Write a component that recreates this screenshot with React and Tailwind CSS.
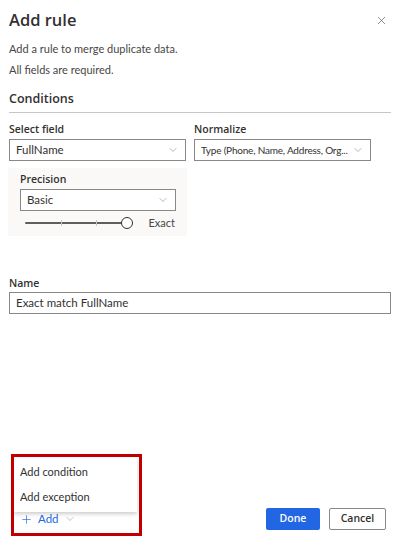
import { X, ChevronDown, Plus } from "lucide-react";

const font = { fontFamily: '"Segoe UI", Lato, "Noto Sans", sans-serif' };
const strong = { fontFamily: '"Segoe UI Semibold", "Open Sans", Lato, sans-serif' };

const Select = ({ value, className = "" }) => (
  <div
    className={`flex h-[22px] items-center justify-between border border-[#8a8886] bg-white pl-[6px] pr-[6px] text-[#323130] ${className}`}
  >
    <span className="whitespace-nowrap">{value}</span>
    <ChevronDown className="ml-[2px] h-3 w-3 shrink-0 text-[#8a8886]" strokeWidth={1.25} />
  </div>
);

const Label = ({ children }) => (
  <label style={strong} className="block text-[10.5px] font-semibold leading-4 text-[#323130]">
    {children}
  </label>
);

export default function App() {
  return (
    <div style={font} className="relative flex h-[539px] w-[400px] flex-col bg-white text-[#323130]">
      {/* header */}
      <div className="flex h-[32px] items-center justify-between pl-[9px] pr-[12px] pt-[8px]">
        <h1 style={strong} className="text-[16.5px] font-semibold leading-6">Add rule</h1>
        <X className="h-[13px] w-[13px] text-[#605e5c]" strokeWidth={1.25} />
      </div>

      <p className="mt-[9px] pl-[9px] text-[11px] leading-4 text-[#484644]">Add a rule to merge duplicate data.</p>
      <p className="mt-[5px] pl-[9px] text-[11px] leading-4 text-[#484644]">All fields are required.</p>

      {/* conditions */}
      <div className="mx-[9px] mt-[11px] border-b border-[#c8c6c4] pb-[3px]">
        <h2 style={strong} className="text-[12.5px] font-semibold leading-5">Conditions</h2>
      </div>

      <div className="mt-[8px] flex gap-[8px] px-[9px]">
        <div className="w-[177px]">
          <Label>Select field</Label>
          <Select value="FullName" className="mt-[2px] text-[11.5px]" />
        </div>
        <div className="w-[177px]">
          <Label>Normalize</Label>
          <Select value="Type (Phone, Name, Address, Org..." className="mt-[2px] text-[10px] tracking-[-0.2px]" />
        </div>
      </div>

      {/* precision panel */}
      <div className="ml-[8px] mt-[7px] h-[68px] w-[179px] bg-[#faf9f8] px-[12px] pt-[3px]">
        <Label>Precision</Label>
        <Select value="Basic" className="mt-[2px] w-[156px] text-[11.5px]" />
        <div className="mt-[4px] flex items-center justify-between pl-[5px]">
          <div className="relative h-[12px] w-[108px]">
            <div className="absolute left-0 right-[6px] top-[5px] h-[2px] rounded bg-[#605e5c]" />
            <div className="absolute left-[36px] top-[3px] h-[6px] w-px bg-[#c8c6c4]" />
            <div className="absolute left-[71px] top-[3px] h-[6px] w-px bg-[#c8c6c4]" />
            <div className="absolute right-0 top-0 h-[12px] w-[12px] rounded-full border-[1.5px] border-[#323130] bg-white" />
          </div>
          <span className="text-[11px] text-[#484644]">Exact</span>
        </div>
      </div>

      {/* name */}
      <div className="mt-[39px] px-[9px]">
        <Label>Name</Label>
        <div className="mt-[1px] flex h-[22px] items-center border border-[#8a8886] pl-[6px] text-[11.5px]">
          Exact match FullName
        </div>
      </div>

      {/* footer */}
      <div className="mt-auto flex items-center justify-between pb-[9px] pl-[20px] pr-[14px]">
        <div className="flex items-center gap-[3px] text-[11.5px] text-[#2266e3]">
          <Plus className="h-[13px] w-[13px]" strokeWidth={1.25} />
          <span className="ml-[2px]">Add</span>
          <ChevronDown className="ml-[2px] h-3 w-3 text-[#a19f9d]" strokeWidth={1.25} />
        </div>
        <div className="flex gap-[9px]">
          <button style={strong} className="h-[22px] w-[54px] rounded-[2px] bg-[#2266e3] text-[10.5px] font-semibold text-white">
            Done
          </button>
          <button style={strong} className="h-[22px] w-[57px] rounded-[2px] border border-[#8a8886] bg-white text-[10.5px] font-semibold text-[#323130]">
            Cancel
          </button>
        </div>
      </div>

      {/* add menu */}
      <div className="absolute left-[14px] top-[458px] w-[123px] bg-white py-[2px] shadow-[0_2px_4px_rgba(0,0,0,0.2)]">
        <div className="flex h-[25px] items-center pl-[6px] text-[11px] text-[#323130]">Add condition</div>
        <div className="flex h-[25px] items-center pl-[6px] text-[11px] text-[#323130]">Add exception</div>
      </div>

      {/* highlight */}
      <div className="pointer-events-none absolute left-[11px] top-[454px] h-[82px] w-[131px] border-[3px] border-[#c00000]" />
    </div>
  );
}
